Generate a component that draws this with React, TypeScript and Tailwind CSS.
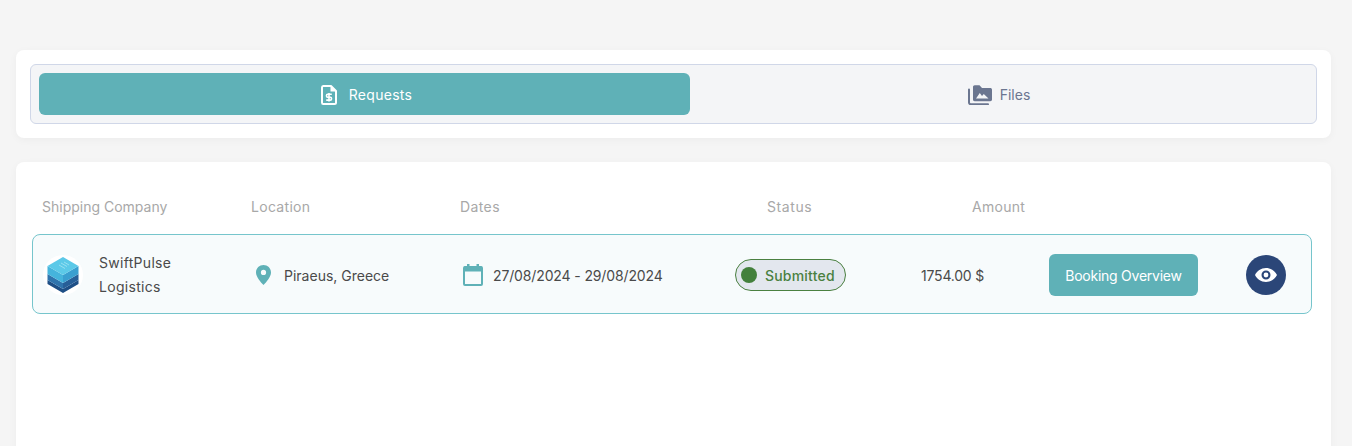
export default function App() {
  return (
    <div className="h-[446px] overflow-hidden bg-[#f5f5f5] px-4 pt-[50px] font-['Inter',sans-serif] text-[14px]">
      <div className="w-[1315px] rounded-lg bg-white p-[14px] shadow-[0_2px_8px_rgba(0,0,0,0.04)]">
        <div className="grid h-[60px] grid-cols-[651px_1fr] rounded-md border border-[#d0d7e8] bg-[#f4f5f7] p-2">
          <div className="flex items-center justify-center gap-[12px] rounded-md bg-[#5fb1b7] pt-[1px] pl-[4px] text-white">
            <svg width="16" height="20" viewBox="0 0 16 20" fill="none">
              <path d="M2.2 1H10L15 6V17.5C15 18.3 14.3 19 13.5 19H2.2C1.5 19 1 18.3 1 17.5V2.5C1 1.7 1.5 1 2.2 1Z" stroke="white" strokeWidth="2" strokeLinejoin="round" />
              <path d="M9.5 1V6.5H15" fill="white" />
              <path d="M10.8 9.3H6.6C5.9 9.3 5.5 9.8 5.5 10.5V11C5.5 11.7 5.9 12.2 6.6 12.2H9.4C10.1 12.2 10.5 12.7 10.5 13.4V13.9C10.5 14.6 10.1 15.1 9.4 15.1H5.2M8 8V16.5" stroke="white" strokeWidth="1.6" />
            </svg>
            <span className="tracking-[0.3px]">Requests</span>
          </div>
          <div className="flex items-center justify-center gap-2 pt-[1px] text-[#6b7690]">
            <svg width="24" height="20" viewBox="0 0 24 20">
              <path d="M1 4.5V17.5C1 18.6 1.7 19.2 2.7 19.2H20" fill="none" stroke="#6b7690" strokeWidth="2" strokeLinecap="round" />
              <path d="M5 2C5 1 5.7 0.3 6.7 0.3H11.5L14 3H22.3C23.2 3 24 3.7 24 4.7V14.5C24 15.5 23.2 16.2 22.3 16.2H6.7C5.7 16.2 5 15.5 5 14.5Z" fill="#6b7690" />
              <path d="M8 13.5L11.8 8L14 11L15.8 9L20.5 13.5Z" fill="#f4f5f7" />
            </svg>
            <span>Files</span>
          </div>
        </div>
      </div>

      <div className="mt-6 h-[300px] w-[1315px] rounded-lg bg-white px-4 pt-[34px] shadow-[0_2px_8px_rgba(0,0,0,0.04)]">
        <div className="grid h-5 grid-cols-[209px_209px_307px_205px_1fr] items-center pl-[10px] text-[#a8a8a8]">
          <span>Shipping Company</span>
          <span className="tracking-[0.3px]">Location</span>
          <span className="tracking-[0.4px]">Dates</span>
          <span className="tracking-[0.6px]">Status</span>
          <span className="tracking-[0.3px]">Amount</span>
        </div>
        <div className="mt-[18px] grid h-20 w-[1280px] grid-cols-[209px_209px_275px_186px_128px_197px_40px] items-center rounded-lg border border-[#76c5cc] bg-[#f7fbfc] pt-[2px] pl-[9px] text-[#4a4a4a]">
          <div className="flex items-center gap-[16px] pl-[1px]">
            <div className="flex h-10 w-10 shrink-0 items-center justify-center rounded-full bg-white">
              <svg width="32" height="36" viewBox="0 0 32 36">
                <path d="M0.5 23L16 32V36L0.5 27Z M31.5 23L16 32V36L31.5 27Z" fill="#1e4f86" />
                <path d="M0.5 17L16 26V32L0.5 23Z" fill="#2f74ad" />
                <path d="M31.5 17L16 26V32L31.5 23Z" fill="#275f98" />
                <path d="M0.5 9L16 18V26L0.5 17Z" fill="#45b4dc" />
                <path d="M31.5 9L16 18V26L31.5 17Z" fill="#3a9fd0" />
                <path d="M16 0L31.5 9L16 18L0.5 9Z" fill="#5cc9e8" />
                <path d="M14 6L20 9.5M12 8L18 11.5M17 5L22 8" stroke="#a5e5f3" strokeWidth="0.8" />
              </svg>
            </div>
            <div className="leading-6 tracking-[0.3px]">
              SwiftPulse
              <br />
              Logistics
            </div>
          </div>
          <div className="flex items-center gap-[13px] pl-[5px]">
            <svg width="15" height="20" viewBox="0 0 15 20">
              <path fillRule="evenodd" d="M7.5 0C11.6 0 15 3.2 15 7.4C15 11.8 10.5 16.8 7.5 20C4.5 16.8 0 11.8 0 7.4C0 3.2 3.4 0 7.5 0ZM7.5 4.8A2.6 2.6 0 1 0 7.5 10A2.6 2.6 0 1 0 7.5 4.8Z" fill="#5fb1b7" />
            </svg>
            <span>Piraeus, Greece</span>
          </div>
          <div className="flex items-center gap-[10px] pl-[3px]">
            <svg width="20" height="22" viewBox="0 0 20 22">
              <rect x="1" y="3" width="18" height="18" rx="1" fill="none" stroke="#5fb1b7" strokeWidth="2" />
              <rect x="1" y="2.5" width="18" height="5" fill="#5fb1b7" />
              <rect x="4" y="0" width="2.5" height="4" fill="#5fb1b7" />
              <rect x="13.5" y="0" width="2.5" height="4" fill="#5fb1b7" />
            </svg>
            <span className="tracking-[-0.13px]">27/08/2024 - 29/08/2024</span>
          </div>
          <div className="flex h-8 w-[111px] items-center gap-2 rounded-full border border-[#4a8040] bg-[#e3e7ee] pl-[5px] font-medium text-[#4a8040]">
            <span className="h-4 w-4 rounded-full bg-[#43803c]" />
            <span className="tracking-[0.2px]">Submitted</span>
          </div>
          <span className="tracking-[-0.2px]">1754.00 $</span>
          <div className="flex h-[42px] w-[149px] items-center justify-center rounded-md bg-[#5fb1b7] text-white">
            <span className="tracking-[-0.25px]">Booking Overview</span>
          </div>
          <div className="flex h-10 w-10 items-center justify-center rounded-full bg-[#2b4678]">
            <svg width="22" height="14" viewBox="0 0 22 14">
              <path fillRule="evenodd" d="M11 0C16 0 20 3.2 22 7C20 10.8 16 14 11 14C6 14 2 10.8 0 7C2 3.2 6 0 11 0ZM11 2.5A4.5 4.5 0 1 0 11 11.5A4.5 4.5 0 1 0 11 2.5ZM11 4.6A2.4 2.4 0 1 1 11 9.4A2.4 2.4 0 1 1 11 4.6Z" fill="white" />
            </svg>
          </div>
        </div>
      </div>
    </div>
  );
}
